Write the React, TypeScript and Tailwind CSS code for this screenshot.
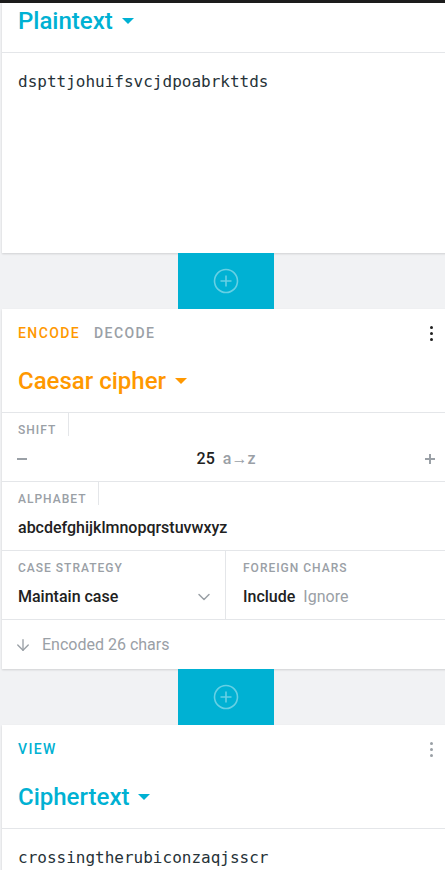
import { ChevronDown, ArrowDown } from "lucide-react"

const CYAN = "text-[#00b1d3]"

function Caret({ color }: { color: string }) {
  return (
    <svg width="12" height="6" viewBox="0 0 12 6" className={color}>
      <path d="M0 0 L12 0 L6 6 Z" fill="currentColor" />
    </svg>
  )
}

function Kebab({ color }: { color: string }) {
  return (
    <div className={`flex flex-col items-center gap-[3px] ${color}`}>
      <span className="w-[3px] h-[3px] rounded-full bg-current" />
      <span className="w-[3px] h-[3px] rounded-full bg-current" />
      <span className="w-[3px] h-[3px] rounded-full bg-current" />
    </div>
  )
}

function AddButton() {
  return (
    <div className="ml-[2px] w-[448px] flex justify-center">
      <div className="w-[96px] h-[56px] bg-[#00b1d3] flex items-center justify-center">
        <svg width="26" height="26" viewBox="0 0 26 26" fill="none" stroke="rgba(255,255,255,0.4)" strokeWidth="1.6">
          <circle cx="13" cy="13" r="11.5" />
          <path d="M13 7.5 V18.5 M7.5 13 H18.5" />
        </svg>
      </div>
    </div>
  )
}

function Label({ text, divider = true, left = "pl-4" }: { text: string; divider?: boolean; left?: string }) {
  return (
    <div className="flex">
      <div
        className={`h-[23px] pt-[9px] ${left} pr-3 text-[12px] leading-4 font-medium tracking-[1px] text-[#9aa0a6] ${
          divider ? "border-r border-[#e4e6e9]" : ""
        }`}
      >
        {text}
      </div>
    </div>
  )
}

export default function App() {
  return (
    <div className="w-[445px] h-[870px] overflow-hidden bg-[#f1f2f4] font-['Roboto',sans-serif] text-[#212121]">
      <div className="h-[3px] bg-[#1c1c1c]" />

      {/* Plaintext card */}
      <div className="ml-[2px] w-[448px] bg-white shadow-[0_1px_2px_rgba(0,0,0,0.14)]">
        <div className="pt-[2px] pb-[15px] pl-4 border-b border-[#e4e6e9]">
          <div className="flex items-center gap-[9px] h-8">
            <span className={`text-[24px] leading-8 font-medium ${CYAN}`}>Plaintext</span>
            <Caret color={CYAN} />
          </div>
        </div>
        <div className="h-[200px] pt-[17px] pl-4 font-['DejaVu_Sans_Mono',monospace] text-[16px] leading-6 text-[#263238]">
          dspttjohuifsvcjdpoabrkttds
        </div>
      </div>

      <AddButton />

      {/* Caesar cipher card */}
      <div className="ml-[2px] w-[448px] bg-white shadow-[0_1px_2px_rgba(0,0,0,0.14)]">
        <div className="pt-3 pl-4 pr-[17px] flex items-center justify-between h-[36px]">
          <div className="flex gap-[14px] text-[14px] leading-6 font-medium tracking-[1.4px]">
            <span className="text-[#ff9800]">ENCODE</span>
            <span className="text-[#9aa0a6]">DECODE</span>
          </div>
          <Kebab color="text-[#212121]" />
        </div>
        <div className="pt-5 pb-[15px] pl-4">
          <div className="flex items-center gap-[9px] h-8">
            <span className="text-[24px] leading-8 font-medium text-[#ff9800]">Caesar cipher</span>
            <Caret color="text-[#ff9800]" />
          </div>
        </div>

        <div className="border-t border-[#e4e6e9]">
          <Label text="SHIFT" />
          <div className="h-[45px] flex items-center justify-between pl-[15px] pr-[15px]">
            <span className="w-[10px] h-[2px] bg-[#9aa0a6]" />
            <div className="flex items-baseline gap-2 text-[16px]">
              <span className="font-medium">25</span>
              <span className="font-medium text-[#9aa0a6]">a→z</span>
            </div>
            <svg width="10" height="10" viewBox="0 0 10 10" className="text-[#9aa0a6]">
              <path d="M5 0 V10 M0 5 H10" stroke="currentColor" strokeWidth="2" />
            </svg>
          </div>
        </div>

        <div className="border-t border-[#e4e6e9]">
          <Label text="ALPHABET" />
          <div className="h-[45px] flex items-center pl-4 text-[16px] font-medium">
            abcdefghijklmnopqrstuvwxyz
          </div>
        </div>

        <div className="border-t border-[#e4e6e9] grid grid-cols-2">
          <div className="border-r border-[#e4e6e9]">
            <Label text="CASE STRATEGY" divider={false} />
            <div className="h-[45px] flex items-center justify-between pl-4 pr-[11px]">
              <span className="text-[16px] font-medium">Maintain case</span>
              <ChevronDown size={20} strokeWidth={1.8} className="text-[#9aa0a6]" />
            </div>
          </div>
          <div>
            <Label text="FOREIGN CHARS" divider={false} left="pl-[17px]" />
            <div className="h-[45px] flex items-center gap-2 pl-[17px] text-[16px]">
              <span className="font-medium">Include</span>
              <span className="text-[#9aa0a6]">Ignore</span>
            </div>
          </div>
        </div>

        <div className="border-t border-[#e4e6e9] h-[50px] flex items-center gap-[10px] pl-[12px] text-[16px] text-[#9aa0a6]">
          <ArrowDown size={18} strokeWidth={1.8} />
          <span>Encoded 26 chars</span>
        </div>
      </div>

      <AddButton />

      {/* Ciphertext card */}
      <div className="ml-[2px] w-[448px] bg-white shadow-[0_1px_2px_rgba(0,0,0,0.14)]">
        <div className="pt-3 pl-4 pr-[17px] flex items-center justify-between h-[36px]">
          <span className={`text-[14px] leading-6 font-medium tracking-[1.4px] ${CYAN}`}>VIEW</span>
          <Kebab color="text-[#9aa0a6]" />
        </div>
        <div className="pt-5 pb-[15px] pl-4 border-b border-[#e4e6e9]">
          <div className="flex items-center gap-[9px] h-8">
            <span className={`text-[24px] leading-8 font-medium ${CYAN}`}>Ciphertext</span>
            <Caret color={CYAN} />
          </div>
        </div>
        <div className="h-[200px] pt-[17px] pl-4 font-['DejaVu_Sans_Mono',monospace] text-[16px] leading-6 text-[#263238]">
          crossingtherubiconzaqjsscr
        </div>
      </div>
    </div>
  )
}
